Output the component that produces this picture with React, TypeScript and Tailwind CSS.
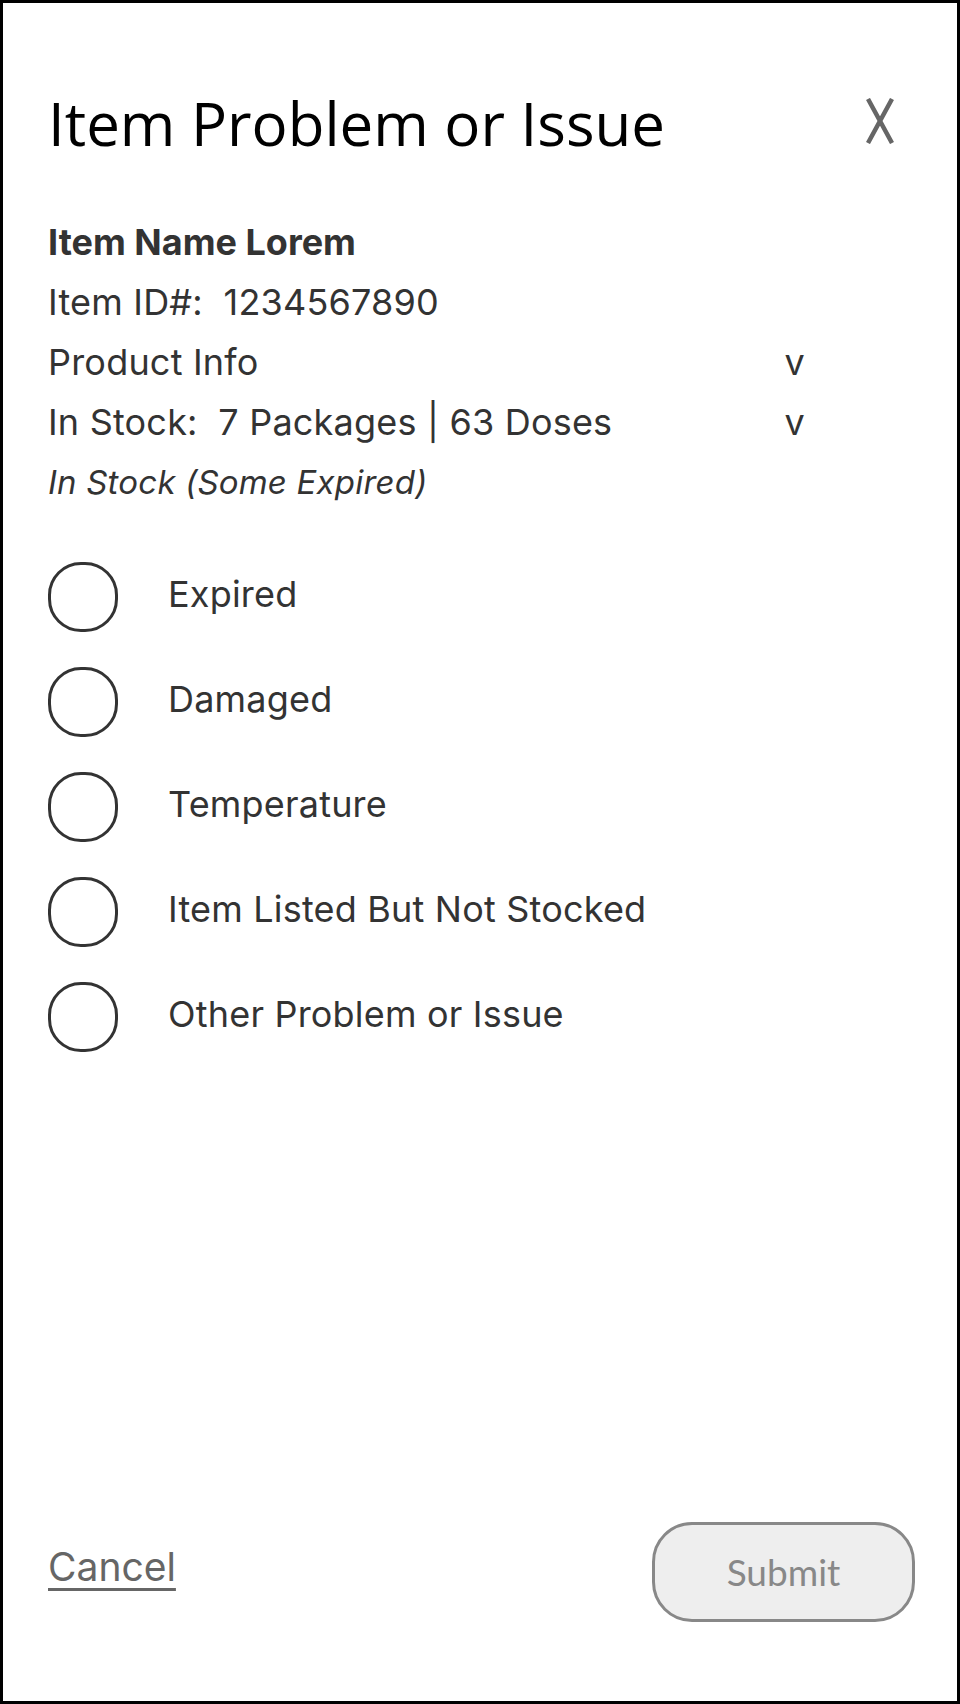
import React from "react";

const issues = [
  "Expired",
  "Damaged",
  "Temperature",
  "Item Listed But Not Stocked",
  "Other Problem or Issue",
];

export default function App() {
  return (
    <div className="w-[960px] h-[1704px] bg-white border-[3px] border-black flex flex-col pl-[45px] pr-[42px] font-['Inter',sans-serif] text-[#333]">
      {/* Header */}
      <div className="flex items-start justify-between mt-[90px]">
        <h1 className="font-['Open_Sans',sans-serif] text-[60px] leading-[60px] text-black">
          Item Problem or Issue
        </h1>
        <svg width="30" height="46" viewBox="0 0 30 46" className="mt-[5px] mr-[20px]" fill="none">
          <path d="M3 1 L27 45 M27 1 L3 45" stroke="#666" strokeWidth="4.5" />
        </svg>
      </div>

      {/* Item info */}
      <div className="mt-[59px] flex flex-col text-[36px] leading-[60px] tracking-[0.2px]">
        <p className="font-bold tracking-normal">Item Name Lorem</p>
        <p>Item ID#:&nbsp; 1234567890</p>
        <div className="flex">
          <span className="flex-1">Product Info</span>
          <span className="mr-[110px]">v</span>
        </div>
        <div className="flex">
          <span className="flex-1">In Stock:&nbsp; 7 Packages | 63 Doses</span>
          <span className="mr-[110px]">v</span>
        </div>
        <p className="italic text-[33px]">In Stock (Some Expired)</p>
      </div>

      {/* Options */}
      <div className="mt-[50px] flex flex-col gap-[35px]">
        {issues.map((label) => (
          <label key={label} className="flex items-center gap-[50px] cursor-pointer">
            <span className="w-[70px] h-[70px] rounded-[33px] border-[3px] border-[#333] shrink-0" />
            <span className="mb-[6px] text-[36px] leading-[40px] tracking-[0.2px]">{label}</span>
          </label>
        ))}
      </div>

      {/* Footer */}
      <div className="mt-auto mb-[79px] flex items-center justify-between">
        <button className="mb-[10px] text-[39px] leading-[44px] text-[#666] underline decoration-[3px] underline-offset-[7px]">
          Cancel
        </button>
        <button className="w-[263px] h-[100px] rounded-[40px] border-[3px] border-[#888] bg-[#eeeeee] text-[#888] text-[37px] font-['Lato',sans-serif]">
          Submit
        </button>
      </div>
    </div>
  );
}
